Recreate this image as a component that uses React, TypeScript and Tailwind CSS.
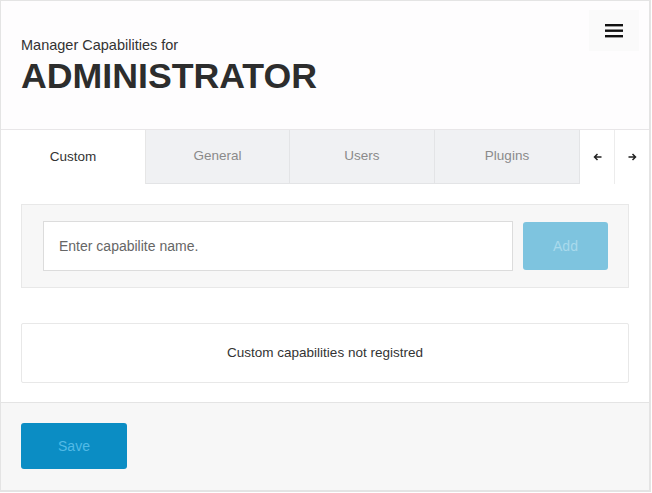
import { useState } from 'react'

const tabs = [
  { label: 'Custom', w: 'w-[145px]' },
  { label: 'General', w: 'w-[144px]' },
  { label: 'Users', w: 'w-[145px]' },
  { label: 'Plugins', w: 'w-[145px]' },
]

export default function App() {
  const [active, setActive] = useState('Custom')
  const [name, setName] = useState('')

  return (
    <div className="w-[652px] h-[493px] bg-white" style={{ fontFamily: '"Liberation Sans", Arial, sans-serif' }}>
      <div className="w-[651px] h-[492px] border border-r-2 border-b-2 border-[#e4e4e4] flex flex-col">
        {/* header */}
        <div className="h-[129px] shrink-0 bg-[#fefdfe] border-b border-[#e8e6e8] flex justify-between pl-5 pr-[10px]">
          <div className="pt-[36px]">
            <div className="text-[14.5px] text-[#333] leading-[17px]">Manager Capabilities for</div>
            <div className="text-[35.7px] font-bold text-[#2d2d2d] leading-[40px] mt-[2px]">ADMINISTRATOR</div>
          </div>
          <button className="mt-[9px] w-[50px] h-[41px] bg-[#fafafa] flex items-center justify-center">
            <svg width="18" height="14" viewBox="0 0 18 14">
              <rect x="0" y="0" width="18" height="2.4" fill="#111" />
              <rect x="0" y="5.5" width="18" height="2.4" fill="#111" />
              <rect x="0" y="11" width="18" height="2.4" fill="#111" />
            </svg>
          </button>
        </div>

        {/* tabs */}
        <div className="h-[54px] shrink-0 flex">
          {tabs.map(t => (
            <button
              key={t.label}
              onClick={() => setActive(t.label)}
              className={
                t.label === active
                  ? `${t.w} bg-white text-[13.5px] text-[#333] border-r border-[#e6e6e6]`
                  : `${t.w} bg-[#f0f1f3] text-[13.5px] text-[#8a8a8a] border-r border-b border-[#e3e4e6]`
              }
            >
              {t.label}
            </button>
          ))}
          <button className="w-[35px] bg-white border-r border-[#ececec] flex items-center justify-center">
            <svg width="9" height="8" viewBox="0 0 9 8">
              <path d="M8.5 4H1.5M4.5 1L1.5 4L4.5 7" stroke="#222" strokeWidth="1.5" fill="none" />
            </svg>
          </button>
          <button className="flex-1 bg-white flex items-center justify-center">
            <svg width="9" height="8" viewBox="0 0 9 8">
              <path d="M0.5 4H7.5M4.5 1L7.5 4L4.5 7" stroke="#222" strokeWidth="1.5" fill="none" />
            </svg>
          </button>
        </div>

        {/* body */}
        <div className="flex-1 bg-white px-5 pt-5">
          <div className="h-[84px] bg-[#f7f7f7] border border-[#e8e8e8] flex items-center gap-[10px] pl-[21px] pr-5">
            <input
              className="flex-1 h-[50px] bg-white border border-[#dcdcdc] px-[15px] text-[14px] text-[#333] placeholder:text-[#666] outline-none"
              placeholder="Enter capabilite name."
              value={name}
              onChange={e => setName(e.target.value)}
            />
            <button className="w-[85px] h-[48px] rounded-[3px] bg-[#7ec4df] text-[14px] text-[#a9daec]">Add</button>
          </div>

          <div className="mt-[35px] h-[60px] border border-[#e8e8e8] rounded-[2px] flex items-center justify-center text-[13.5px] text-[#333]">
            Custom capabilities not registred
          </div>
        </div>

        {/* footer */}
        <div className="h-[88px] shrink-0 bg-[#f7f7f7] border-t border-[#e4e4e4] pl-5 pt-5">
          <button className="w-[106px] h-[46px] rounded-[3px] bg-[#0b8dc4] text-[14px] text-[#52bae6]">Save</button>
        </div>
      </div>
    </div>
  )
}
